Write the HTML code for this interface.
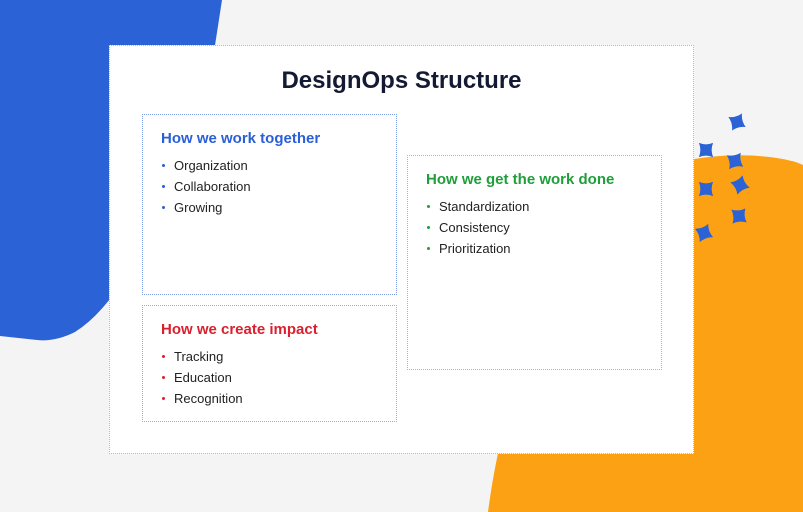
<!DOCTYPE html>
<html><head><meta charset="utf-8"><style>
body{margin:0;width:803px;height:512px;background:#f4f4f5;position:relative;overflow:hidden;font-family:"Liberation Sans",sans-serif}
svg.bg{position:absolute;left:0;top:0}
.card{position:absolute;left:109px;top:45px;width:583px;height:407px;background:#fff;border:1px dotted #b8b8bc}
h1{position:absolute;left:0;right:0;top:21px;margin:0;text-align:center;font-size:24px;font-weight:bold;color:#141a33}
.box{position:absolute;box-sizing:border-box;padding:15px 18px}
.box h2{margin:0 0 8px;font-size:15px;font-weight:bold}
.box ul{margin:0;padding:0;list-style:none}
.box li{font-size:13px;color:#222;line-height:21px;padding-left:13px;position:relative}
.box li:before{content:"";position:absolute;left:1px;top:9px;width:3px;height:3px;border-radius:2px}
.b{left:32px;top:68px;width:255px;height:181px;border:1px dotted #7f9ce8}
.b h2{color:#2a5fd6}.b li:before{background:#2a5fd6}
.r{left:32px;top:259px;width:255px;height:117px;border:1px dotted #ef8f99}
.r h2{color:#d9202f}.r li:before{background:#d9202f}
.g{left:297px;top:109px;width:255px;height:215px;border:1px dotted #8ccc9c}
.g h2{color:#1f9e3a}.g li:before{background:#1f9e3a}
</style></head><body>
<svg class="bg" width="803" height="512">
<path d="M0,0 L222,0 L205,110 L140,250 Q110,310 75,332 Q55,342 37,340 L0,336 Z" fill="#2b62d6"/>
<path d="M488,512 C505,380 565,205 690,160 C740,150 790,158 803,165 L803,512 Z" fill="#fca114"/>
<g fill="#2b62d6">
<path id="s" d="M0,-10 Q3,-3 10,0 Q3,3 0,10 Q-3,3 -10,0 Q-3,-3 0,-10Z"/>
<use href="#s" transform="translate(737,122) rotate(30)"/>
<use href="#s" transform="translate(706,150) rotate(45)"/>
<use href="#s" transform="translate(735,161) rotate(35)"/>
<use href="#s" transform="translate(740,185) rotate(15)"/>
<use href="#s" transform="translate(706,189) rotate(45)"/>
<use href="#s" transform="translate(739,216) rotate(40)"/>
<use href="#s" transform="translate(704,233) rotate(25)"/>
</g>
</svg>
<div class="card">
<h1>DesignOps Structure</h1>
<div class="box b"><h2>How we work together</h2><ul><li>Organization</li><li>Collaboration</li><li>Growing</li></ul></div>
<div class="box r"><h2>How we create impact</h2><ul><li>Tracking</li><li>Education</li><li>Recognition</li></ul></div>
<div class="box g"><h2>How we get the work done</h2><ul><li>Standardization</li><li>Consistency</li><li>Prioritization</li></ul></div>
</div>
</body></html>
